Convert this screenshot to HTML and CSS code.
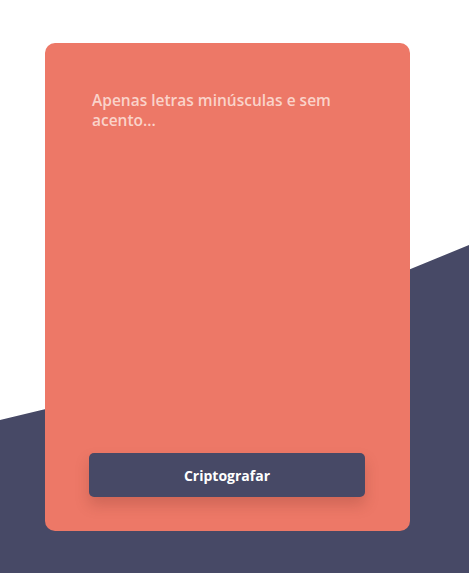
FILE: index.html
```html
<!DOCTYPE html>
<html lang="pt-BR">
<head>
<meta charset="utf-8">
<title>Criptografar</title>
<link rel="stylesheet" href="styles.css">
</head>
<body>
<div class="backdrop"></div>
<main class="page">
  <section class="card">
    <textarea class="input" placeholder="Apenas letras minúsculas e sem acento..."></textarea>
    <button class="btn" type="button">Criptografar</button>
  </section>
</main>
</body>
</html>
```
FILE: styles.css
```css
html, body {
  margin: 0;
  padding: 0;
  background: #ffffff;
  font-family: "Open Sans", "Noto Sans", sans-serif;
}
body {
  width: 469px;
  height: 573px;
  overflow: hidden;
  position: relative;
}
.backdrop {
  position: absolute;
  inset: 0;
  background: #474966;
  clip-path: polygon(0 420px, 104px 395px, 469px 245px, 469px 573px, 0 573px);
  z-index: 0;
}
.page {
  position: relative;
  z-index: 1;
  padding: 43px 0 0 45px;
}
.card {
  width: 365px;
  height: 488px;
  box-sizing: border-box;
  background: #ed7867;
  border-radius: 10px;
  padding: 44px 45px 34px 44px;
  display: flex;
  flex-direction: column;
}
.input {
  flex: 1;
  width: 100%;
  box-sizing: border-box;
  border: none;
  outline: none;
  resize: none;
  background: transparent;
  padding: 3px;
  margin: 0;
  font-family: "Open Sans", "Noto Sans", sans-serif;
  font-size: 15.5px;
  font-weight: 600;
  line-height: 20px;
  color: #fad3ca;
}
.input::placeholder {
  color: #fad3ca;
  opacity: 1;
}
.btn {
  height: 44px;
  width: 100%;
  border: none;
  border-radius: 5px;
  background: #474966;
  color: #ffffff;
  font-family: "Open Sans", "Noto Sans", sans-serif;
  font-size: 14px;
  font-weight: 700;
  box-shadow: 0 8px 14px rgba(120, 50, 40, 0.25);
  cursor: pointer;
}
```
